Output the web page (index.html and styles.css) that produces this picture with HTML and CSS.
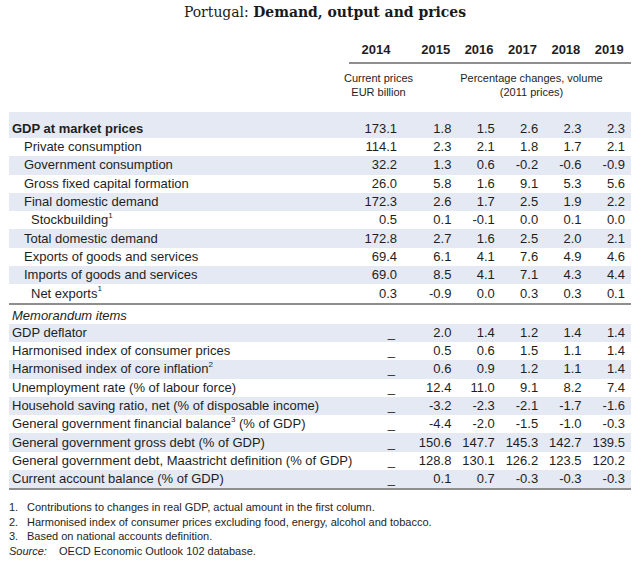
FILE: index.html
```html
<!DOCTYPE html>
<html lang="en">
<head>
<meta charset="utf-8">
<title>Portugal: Demand, output and prices</title>
<link rel="stylesheet" href="styles.css">
</head>
<body>
<div class="page">
  <h1 class="title">Portugal: <b>Demand, output and prices</b></h1>

  <div class="tbl">
    <div class="row years">
      <div class="blank"></div>
      <div class="yr y14">2014</div>
      <div class="yr">2015</div>
      <div class="yr">2016</div>
      <div class="yr">2017</div>
      <div class="yr">2018</div>
      <div class="yr">2019</div>
    </div>
    <div class="row units">
      <div class="blank"></div>
      <div class="unit u14"><span>Current prices<br>EUR billion</span></div>
      <div class="unit upct"><span>Percentage changes, volume<br>(2011 prices)</span></div>
    </div>

    <div class="body">
      <div class="row first shade"><div class="lab bold">GDP at market prices</div><div class="n14">173.1</div><div class="n">1.8</div><div class="n">1.5</div><div class="n">2.6</div><div class="n">2.3</div><div class="n">2.3</div></div>
      <div class="row"><div class="lab l1">Private consumption</div><div class="n14">114.1</div><div class="n">2.3</div><div class="n">2.1</div><div class="n">1.8</div><div class="n">1.7</div><div class="n">2.1</div></div>
      <div class="row shade"><div class="lab l1">Government consumption</div><div class="n14">32.2</div><div class="n">1.3</div><div class="n">0.6</div><div class="n">-0.2</div><div class="n">-0.6</div><div class="n">-0.9</div></div>
      <div class="row"><div class="lab l1">Gross fixed capital formation</div><div class="n14">26.0</div><div class="n">5.8</div><div class="n">1.6</div><div class="n">9.1</div><div class="n">5.3</div><div class="n">5.6</div></div>
      <div class="row shade"><div class="lab l1">Final domestic demand</div><div class="n14">172.3</div><div class="n">2.6</div><div class="n">1.7</div><div class="n">2.5</div><div class="n">1.9</div><div class="n">2.2</div></div>
      <div class="row"><div class="lab l2">Stockbuilding<sup>1</sup></div><div class="n14">0.5</div><div class="n">0.1</div><div class="n">-0.1</div><div class="n">0.0</div><div class="n">0.1</div><div class="n">0.0</div></div>
      <div class="row shade"><div class="lab l1">Total domestic demand</div><div class="n14">172.8</div><div class="n">2.7</div><div class="n">1.6</div><div class="n">2.5</div><div class="n">2.0</div><div class="n">2.1</div></div>
      <div class="row"><div class="lab l1">Exports of goods and services</div><div class="n14">69.4</div><div class="n">6.1</div><div class="n">4.1</div><div class="n">7.6</div><div class="n">4.9</div><div class="n">4.6</div></div>
      <div class="row shade"><div class="lab l1">Imports of goods and services</div><div class="n14">69.0</div><div class="n">8.5</div><div class="n">4.1</div><div class="n">7.1</div><div class="n">4.3</div><div class="n">4.4</div></div>
      <div class="row"><div class="lab l2">Net exports<sup>1</sup></div><div class="n14">0.3</div><div class="n">-0.9</div><div class="n">0.0</div><div class="n">0.3</div><div class="n">0.3</div><div class="n">0.1</div></div>
    </div>

    <div class="body memo">
      <div class="row memohead"><div class="lab ital">Memorandum items</div></div>
      <div class="row shade"><div class="lab">GDP deflator</div><div class="d14">_</div><div class="n">2.0</div><div class="n">1.4</div><div class="n">1.2</div><div class="n">1.4</div><div class="n">1.4</div></div>
      <div class="row"><div class="lab">Harmonised index of consumer prices</div><div class="d14">_</div><div class="n">0.5</div><div class="n">0.6</div><div class="n">1.5</div><div class="n">1.1</div><div class="n">1.4</div></div>
      <div class="row shade"><div class="lab">Harmonised index of core inflation<sup>2</sup></div><div class="d14">_</div><div class="n">0.6</div><div class="n">0.9</div><div class="n">1.2</div><div class="n">1.1</div><div class="n">1.4</div></div>
      <div class="row"><div class="lab">Unemployment rate (% of labour force)</div><div class="d14">_</div><div class="n">12.4</div><div class="n">11.0</div><div class="n">9.1</div><div class="n">8.2</div><div class="n">7.4</div></div>
      <div class="row shade"><div class="lab">Household saving ratio, net (% of disposable income)</div><div class="d14">_</div><div class="n">-3.2</div><div class="n">-2.3</div><div class="n">-2.1</div><div class="n">-1.7</div><div class="n">-1.6</div></div>
      <div class="row"><div class="lab">General government financial balance<sup>3</sup> (% of GDP)</div><div class="d14">_</div><div class="n">-4.4</div><div class="n">-2.0</div><div class="n">-1.5</div><div class="n">-1.0</div><div class="n">-0.3</div></div>
      <div class="row shade"><div class="lab">General government gross debt (% of GDP)</div><div class="d14">_</div><div class="n">150.6</div><div class="n">147.7</div><div class="n">145.3</div><div class="n">142.7</div><div class="n">139.5</div></div>
      <div class="row"><div class="lab">General government debt, Maastricht definition (% of GDP)</div><div class="d14">_</div><div class="n">128.8</div><div class="n">130.1</div><div class="n">126.2</div><div class="n">123.5</div><div class="n">120.2</div></div>
      <div class="row shade"><div class="lab">Current account balance (% of GDP)</div><div class="d14">_</div><div class="n">0.1</div><div class="n">0.7</div><div class="n">-0.3</div><div class="n">-0.3</div><div class="n">-0.3</div></div>
    </div>
  </div>

  <div class="notes">
    <div class="note"><span class="nn">1.</span><span>Contributions to changes in real GDP, actual amount in the first column.</span></div>
    <div class="note"><span class="nn">2.</span><span>Harmonised index of consumer prices excluding food, energy, alcohol and tobacco.</span></div>
    <div class="note"><span class="nn">3.</span><span>Based on national accounts definition.</span></div>
    <div class="note"><span class="src">Source:</span><span>OECD Economic Outlook 102 database.</span></div>
  </div>
</div>
</body>
</html>
```

FILE: styles.css
```css
* { box-sizing: border-box; }
html, body { margin: 0; padding: 0; background: #fff; }
body {
  font-family: "Liberation Sans", Arial, sans-serif;
  color: #1e1e1e;
}
.page {
  width: 639px;
  padding: 0 8px 0 9px;
}
.title {
  margin: 0;
  height: 26px;
  line-height: 24px;
  padding-left: 10px;
  text-align: center;
  font-family: "DejaVu Serif Condensed", "DejaVu Serif", serif;
  font-weight: normal;
  font-size: 15.5px;
  color: #1a1a1a;
}
.title b { font-weight: bold; }

.tbl { width: 622px; }
.row {
  display: grid;
  grid-template-columns: 340px 65px repeat(5, 43.4px);
  height: 18.3px;
  align-items: center;
  font-size: 13px;
  line-height: 16px;
}
.row.shade { background: #e4e9f3; }

.years {
  margin-top: 12px;
  height: 26px;
  font-size: 13px;
  font-weight: bold;
}
.years .yr {
  height: 26px;
  line-height: 24px;
  text-align: center;
  border-bottom: 2px solid #8e8e8e;
}
.years .y14 { padding-right: 11px; }

.units {
  height: 48px;
  align-items: start;
  font-size: 11px;
  line-height: 14px;
  padding-top: 7px;
}
.unit { display: flex; justify-content: center; white-space: nowrap; text-align: center; }
.u14 { padding-right: 6px; }
.upct { grid-column: 3 / 8; padding-left: 18px; }

.body { border-bottom: 2px solid #8e8e8e; }
.row.first { height: 26px; align-items: end; padding-bottom: 1px; }

.lab { padding-left: 3px; white-space: nowrap; }
.lab.l1 { padding-left: 15px; }
.lab.l2 { padding-left: 22px; }
.bold { font-weight: bold; }
.ital { font-style: italic; }
.n14 { text-align: right; padding-right: 17px; }
.d14 { text-align: right; padding-right: 19px; }
.n { text-align: right; padding-right: 6px; }

.memohead { height: 19px; padding-top: 3px; }

sup {
  font-size: 8px;
  line-height: 0;
  position: relative;
  top: -1px;
  vertical-align: super;
}

.notes {
  margin-top: 10px;
  font-size: 11px;
  line-height: 14.5px;
}
.note { display: flex; white-space: nowrap; }
.nn { width: 18px; }
.src { font-style: italic; width: 50px; }
```
